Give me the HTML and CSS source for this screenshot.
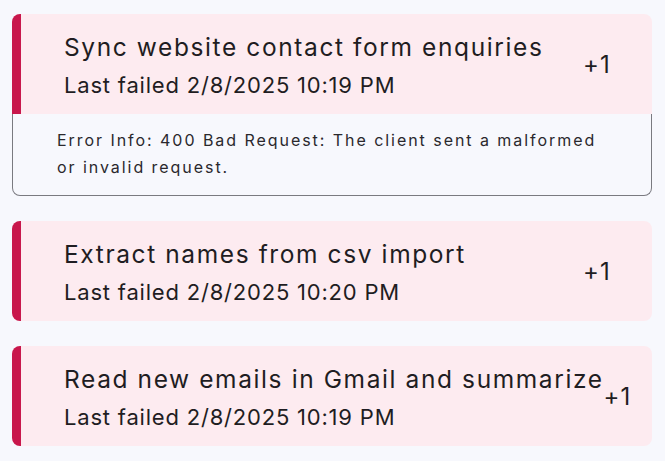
FILE: index.html
```html
<!DOCTYPE html>
<html>
<head>
<meta charset="utf-8">
<link rel="stylesheet" href="styles.css">
</head>
<body>
<div class="list">
  <div class="card expanded">
    <div class="header">
      <div class="bar"></div>
      <div class="content">
        <div class="text">
          <div class="title">Sync website contact form enquiries</div>
          <div class="subtitle">Last failed 2/8/2025 10:19 PM</div>
        </div>
        <div class="trailing"><span>+1</span></div>
      </div>
    </div>
    <div class="details">
      Error Info: 400 Bad Request: The client sent a malformed or invalid request.
    </div>
  </div>
  <div class="card">
    <div class="header">
      <div class="bar"></div>
      <div class="content">
        <div class="text">
          <div class="title">Extract names from csv import</div>
          <div class="subtitle">Last failed 2/8/2025 10:20 PM</div>
        </div>
        <div class="trailing"><span>+1</span></div>
      </div>
    </div>
  </div>
  <div class="card">
    <div class="header">
      <div class="bar"></div>
      <div class="content">
        <div class="text">
          <div class="title">Read new emails in Gmail and summarize</div>
          <div class="subtitle">Last failed 2/8/2025 10:19 PM</div>
        </div>
        <div class="trailing"><span>+1</span></div>
      </div>
    </div>
  </div>
</div>
</body>
</html>
```
FILE: styles.css
```css
html, body {
  margin: 0;
  padding: 0;
  background: #f7f8fd;
}
body {
  font-family: Inter, Roboto, "Liberation Sans", sans-serif;
  color: #1f1d22;
}
.list {
  display: flex;
  flex-direction: column;
  gap: 25px;
  padding: 14px 13px 0 12px;
}
.card {
  border-radius: 8px;
  overflow: hidden;
}
.header {
  display: flex;
  height: 100px;
  background: #fdebf0;
}
.bar {
  width: 9px;
  flex: 0 0 9px;
  background: #c8174c;
}
.content {
  flex: 1;
  display: flex;
  align-items: center;
  padding-left: 43px;
  min-width: 0;
}
.text {
  flex: 1 0 auto;
  display: flex;
  flex-direction: column;
}
.title {
  font-size: 24.5px;
  line-height: 42px;
  letter-spacing: 1.6px;
  white-space: nowrap;
}
.subtitle {
  font-size: 22px;
  line-height: 34px;
  letter-spacing: 0.8px;
  white-space: nowrap;
}
.trailing {
  flex: 0 1 69px;
  min-width: 30px;
  font-size: 24px;
  letter-spacing: 1px;
  white-space: nowrap;
}
.details {
  border: 1px solid #7a7a80;
  border-top: none;
  border-radius: 0 0 8px 8px;
  padding: 13px 40px 14px 44px;
  font-size: 16px;
  line-height: 27px;
  letter-spacing: 1.95px;
  color: #2a282d;
}
.card.expanded {
  overflow: visible;
}
.card.expanded .header {
  border-radius: 8px 8px 0 0;
  overflow: hidden;
}
```
